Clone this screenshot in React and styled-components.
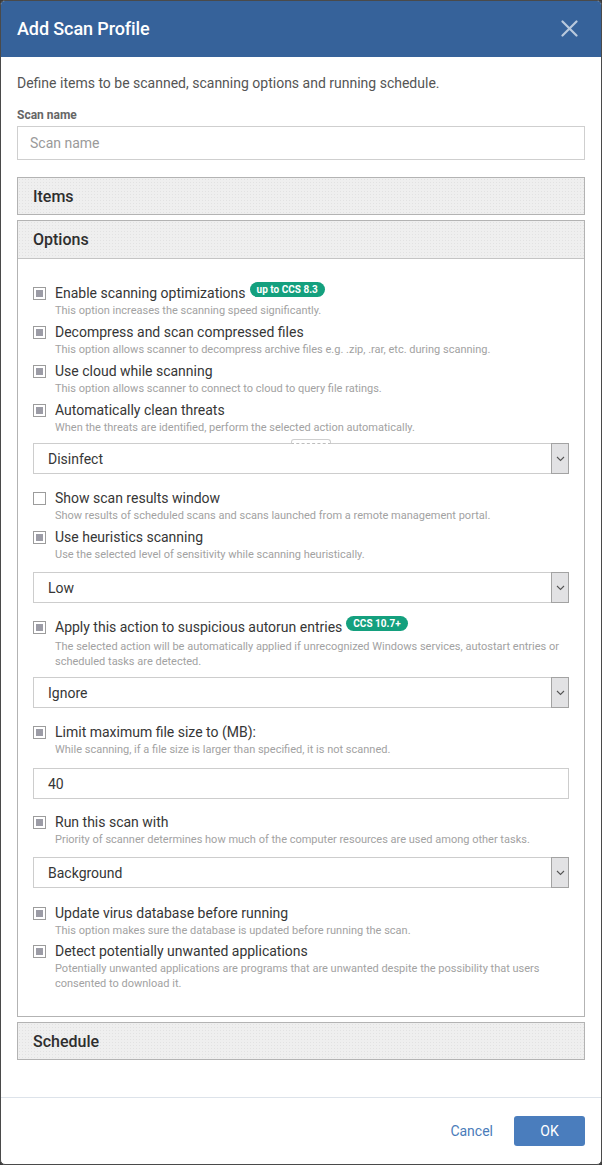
import React from "react";
import styled, { createGlobalStyle } from "styled-components";

const Global = createGlobalStyle`
  html, body { margin: 0; padding: 0; background: #3c3c3c; }
  body { font-family: Roboto, "Liberation Sans", Arial, sans-serif; }
  * { box-sizing: border-box; }
`;

const Dialog = styled.div`
  width: 602px;
  height: 1165px;
  display: flex;
  flex-direction: column;
  background: #fff;
  border: 1px solid #4a4a4a;
  border-radius: 5px;
  overflow: hidden;
`;

const Header = styled.div`
  height: 56px;
  flex: none;
  background: #36629a;
  display: flex;
  align-items: center;
  justify-content: space-between;
  padding: 0 23px 2px 16px;
`;

const Title = styled.h1`
  margin: 0;
  color: #fff;
  font-size: 18px;
  font-weight: 500;
  letter-spacing: -0.1px;
`;

const CloseBtn = styled.button`
  border: 0;
  background: transparent;
  padding: 0;
  width: 18px;
  height: 18px;
  display: flex;
  align-items: center;
  justify-content: center;
  cursor: pointer;
`;

const Body = styled.div`
  flex: 1;
  padding: 16px 16px 0 16px;
  display: flex;
  flex-direction: column;
`;

const Intro = styled.p`
  margin: 0;
  font-size: 14px;
  line-height: 20px;
  color: #555;
`;

const FieldLabel = styled.label`
  margin-top: 14px;
  font-size: 12px;
  line-height: 16px;
  font-weight: 700;
  color: #666;
`;

const TextInput = styled.input`
  margin-top: 3px;
  height: 34px;
  width: 100%;
  border: 1px solid #cfcfcf;
  padding: 0 12px;
  font-family: inherit;
  font-size: 14px;
  color: #333;
  outline: none;
  &::placeholder { color: #9a9a9a; }
`;

const Panel = styled.section`
  margin-top: ${(p) => p.$mt}px;
  border: 1px solid #b3b3b3;
`;

const PanelHead = styled.div`
  height: ${(p) => (p.$open ? 38 : 36)}px;
  display: flex;
  align-items: center;
  padding-left: 15px;
  font-size: 16px;
  font-weight: 500;
  color: #2e2e2e;
  background-color: #efefef;
  background-image: radial-gradient(#e2e2e2 0.6px, transparent 0.7px);
  background-size: 3px 3px;
  border-bottom: ${(p) => (p.$open ? "1px solid #c4c4c4" : "none")};
`;

const PanelBody = styled.div`
  padding: 25px 15px 25px 15px;
  display: flex;
  flex-direction: column;
`;

const OptionRow = styled.div`
  display: grid;
  grid-template-columns: 22px 1fr;
  margin-bottom: ${(p) => (p.$mb != null ? p.$mb : 5)}px;
`;

const Box = styled.span`
  width: 13px;
  height: 13px;
  margin-top: 3px;
  border: 1px solid #9c9c9c;
  background: #fff;
  display: flex;
  align-items: center;
  justify-content: center;
  &::after {
    content: "";
    width: 7px;
    height: 7px;
    background: ${(p) => (p.$checked ? "#9c9ca6" : "transparent")};
  }
`;

const LabelLine = styled.div`
  display: flex;
  align-items: flex-start;
  font-size: 14px;
  line-height: 19px;
  color: #363636;
`;

const Badge = styled.span`
  margin-left: 4px;
  margin-top: -2px;
  height: 15px;
  padding: 0 7px;
  border-radius: 8px;
  background: #14a07e;
  color: #fff;
  font-size: 10px;
  font-weight: 700;
  line-height: 15px;
  white-space: nowrap;
`;

const Desc = styled.div`
  grid-column: 2;
  margin-top: ${(p) => (p.$mt != null ? p.$mt : 0)}px;
  font-size: 11px;
  line-height: 15px;
  color: #a2a2a2;
`;

const SelectBox = styled.div`
  position: relative;
  height: 31px;
  margin: ${(p) => p.$mt}px 0 ${(p) => p.$mb}px 0;
  border: 1px solid #cdcdcd;
  display: flex;
  align-items: stretch;
  font-size: 14px;
  color: #363636;
`;

const SelectValue = styled.span`
  flex: 1;
  display: flex;
  align-items: center;
  padding-left: 14px;
`;

const ArrowBox = styled.span`
  width: 18px;
  margin: -1px -1px -1px 0;
  background: #e2e2e4;
  border: 1px solid #a3a3a3;
  display: flex;
  align-items: center;
  justify-content: center;
`;

const Tab = styled.span`
  position: absolute;
  top: -5px;
  left: 257px;
  width: 40px;
  height: 5px;
  border: 1px solid #cfcfcf;
  border-bottom: 1px dashed #bdbdbd;
  border-radius: 3px 3px 0 0;
  background: #fff;
`;

const NumberField = styled.div`
  height: 31px;
  margin: 6px 0 14px 0;
  border: 1px solid #cdcdcd;
  display: flex;
  align-items: center;
  padding-left: 14px;
  font-size: 14px;
  color: #363636;
`;

const Footer = styled.div`
  flex: none;
  height: 67px;
  border-top: 1px solid #dde3ea;
  display: flex;
  align-items: flex-start;
  justify-content: flex-end;
  gap: 21px;
  padding: 18px 16px 0 0;
`;

const LinkBtn = styled.button`
  border: 0;
  background: transparent;
  font-family: inherit;
  font-size: 14px;
  color: #4a7cba;
  height: 30px;
  padding: 0;
  cursor: pointer;
`;

const PrimaryBtn = styled.button`
  width: 71px;
  height: 30px;
  border: 0;
  border-radius: 3px;
  background: #4a7dbd;
  color: #fff;
  font-family: inherit;
  font-size: 14px;
  cursor: pointer;
`;

const Chevron = () => (
  <svg width="9" height="6" viewBox="0 0 9 6">
    <path d="M1 1 L4.5 4.5 L8 1" fill="none" stroke="#555" strokeWidth="1.1" />
  </svg>
);

const Option = ({ checked = true, label, badge, desc, mb, descMt }) => (
  <OptionRow $mb={mb}>
    <Box $checked={checked} />
    <LabelLine>
      {label}
      {badge && <Badge>{badge}</Badge>}
    </LabelLine>
    <Desc $mt={descMt}>{desc}</Desc>
  </OptionRow>
);

const Select = ({ value, mt = 5, mb = 15, tab }) => (
  <SelectBox $mt={mt} $mb={mb}>
    {tab && <Tab />}
    <SelectValue>{value}</SelectValue>
    <ArrowBox>
      <Chevron />
    </ArrowBox>
  </SelectBox>
);

export default function App() {
  return (
    <>
      <Global />
      <Dialog>
        <Header>
          <Title>Add Scan Profile</Title>
          <CloseBtn aria-label="Close">
            <svg width="17" height="17" viewBox="0 0 17 17">
              <path d="M1.5 1.5 L15.5 15.5 M15.5 1.5 L1.5 15.5" stroke="#b9c9dd" strokeWidth="2.2" strokeLinecap="round" />
            </svg>
          </CloseBtn>
        </Header>
        <Body>
          <Intro>Define items to be scanned, scanning options and running schedule.</Intro>
          <FieldLabel>Scan name</FieldLabel>
          <TextInput placeholder="Scan name" />
          <Panel $mt={17}>
            <PanelHead>Items</PanelHead>
          </Panel>
          <Panel $mt={5}>
            <PanelHead $open>Options</PanelHead>
            <PanelBody>
              <Option label="Enable scanning optimizations" badge="up to CCS 8.3" desc="This option increases the scanning speed significantly." />
              <Option label="Decompress and scan compressed files" desc="This option allows scanner to decompress archive files e.g. .zip, .rar, etc. during scanning." />
              <Option label="Use cloud while scanning" desc="This option allows scanner to connect to cloud to query file ratings." />
              <Option label="Automatically clean threats" desc="When the threats are identified, perform the selected action automatically." />
              <Select value="Disinfect" mt={3} tab />
              <Option checked={false} label="Show scan results window" desc="Show results of scheduled scans and scans launched from a remote management portal." />
              <Option label="Use heuristics scanning" desc="Use the selected level of sensitivity while scanning heuristically." />
              <Select value="Low" />
              <Option label="Apply this action to suspicious autorun entries" badge="CCS 10.7+" desc="The selected action will be automatically applied if unrecognized Windows services, autostart entries or scheduled tasks are detected." descMt={2} mb={3} />
              <Select value="Ignore" />
              <Option label="Limit maximum file size to (MB):" desc="While scanning, if a file size is larger than specified, it is not scanned." />
              <NumberField>40</NumberField>
              <Option label="Run this scan with" desc="Priority of scanner determines how much of the computer resources are used among other tasks." />
              <Select value="Background" mb={16} />
              <Option label="Update virus database before running" desc="This option makes sure the database is updated before running the scan." mb={4} />
              <Option label="Detect potentially unwanted applications" desc="Potentially unwanted applications are programs that are unwanted despite the possibility that users consented to download it." mb={0} />
            </PanelBody>
          </Panel>
          <Panel $mt={5}>
            <PanelHead>Schedule</PanelHead>
          </Panel>
        </Body>
        <Footer>
          <LinkBtn>Cancel</LinkBtn>
          <PrimaryBtn>OK</PrimaryBtn>
        </Footer>
      </Dialog>
    </>
  );
}
